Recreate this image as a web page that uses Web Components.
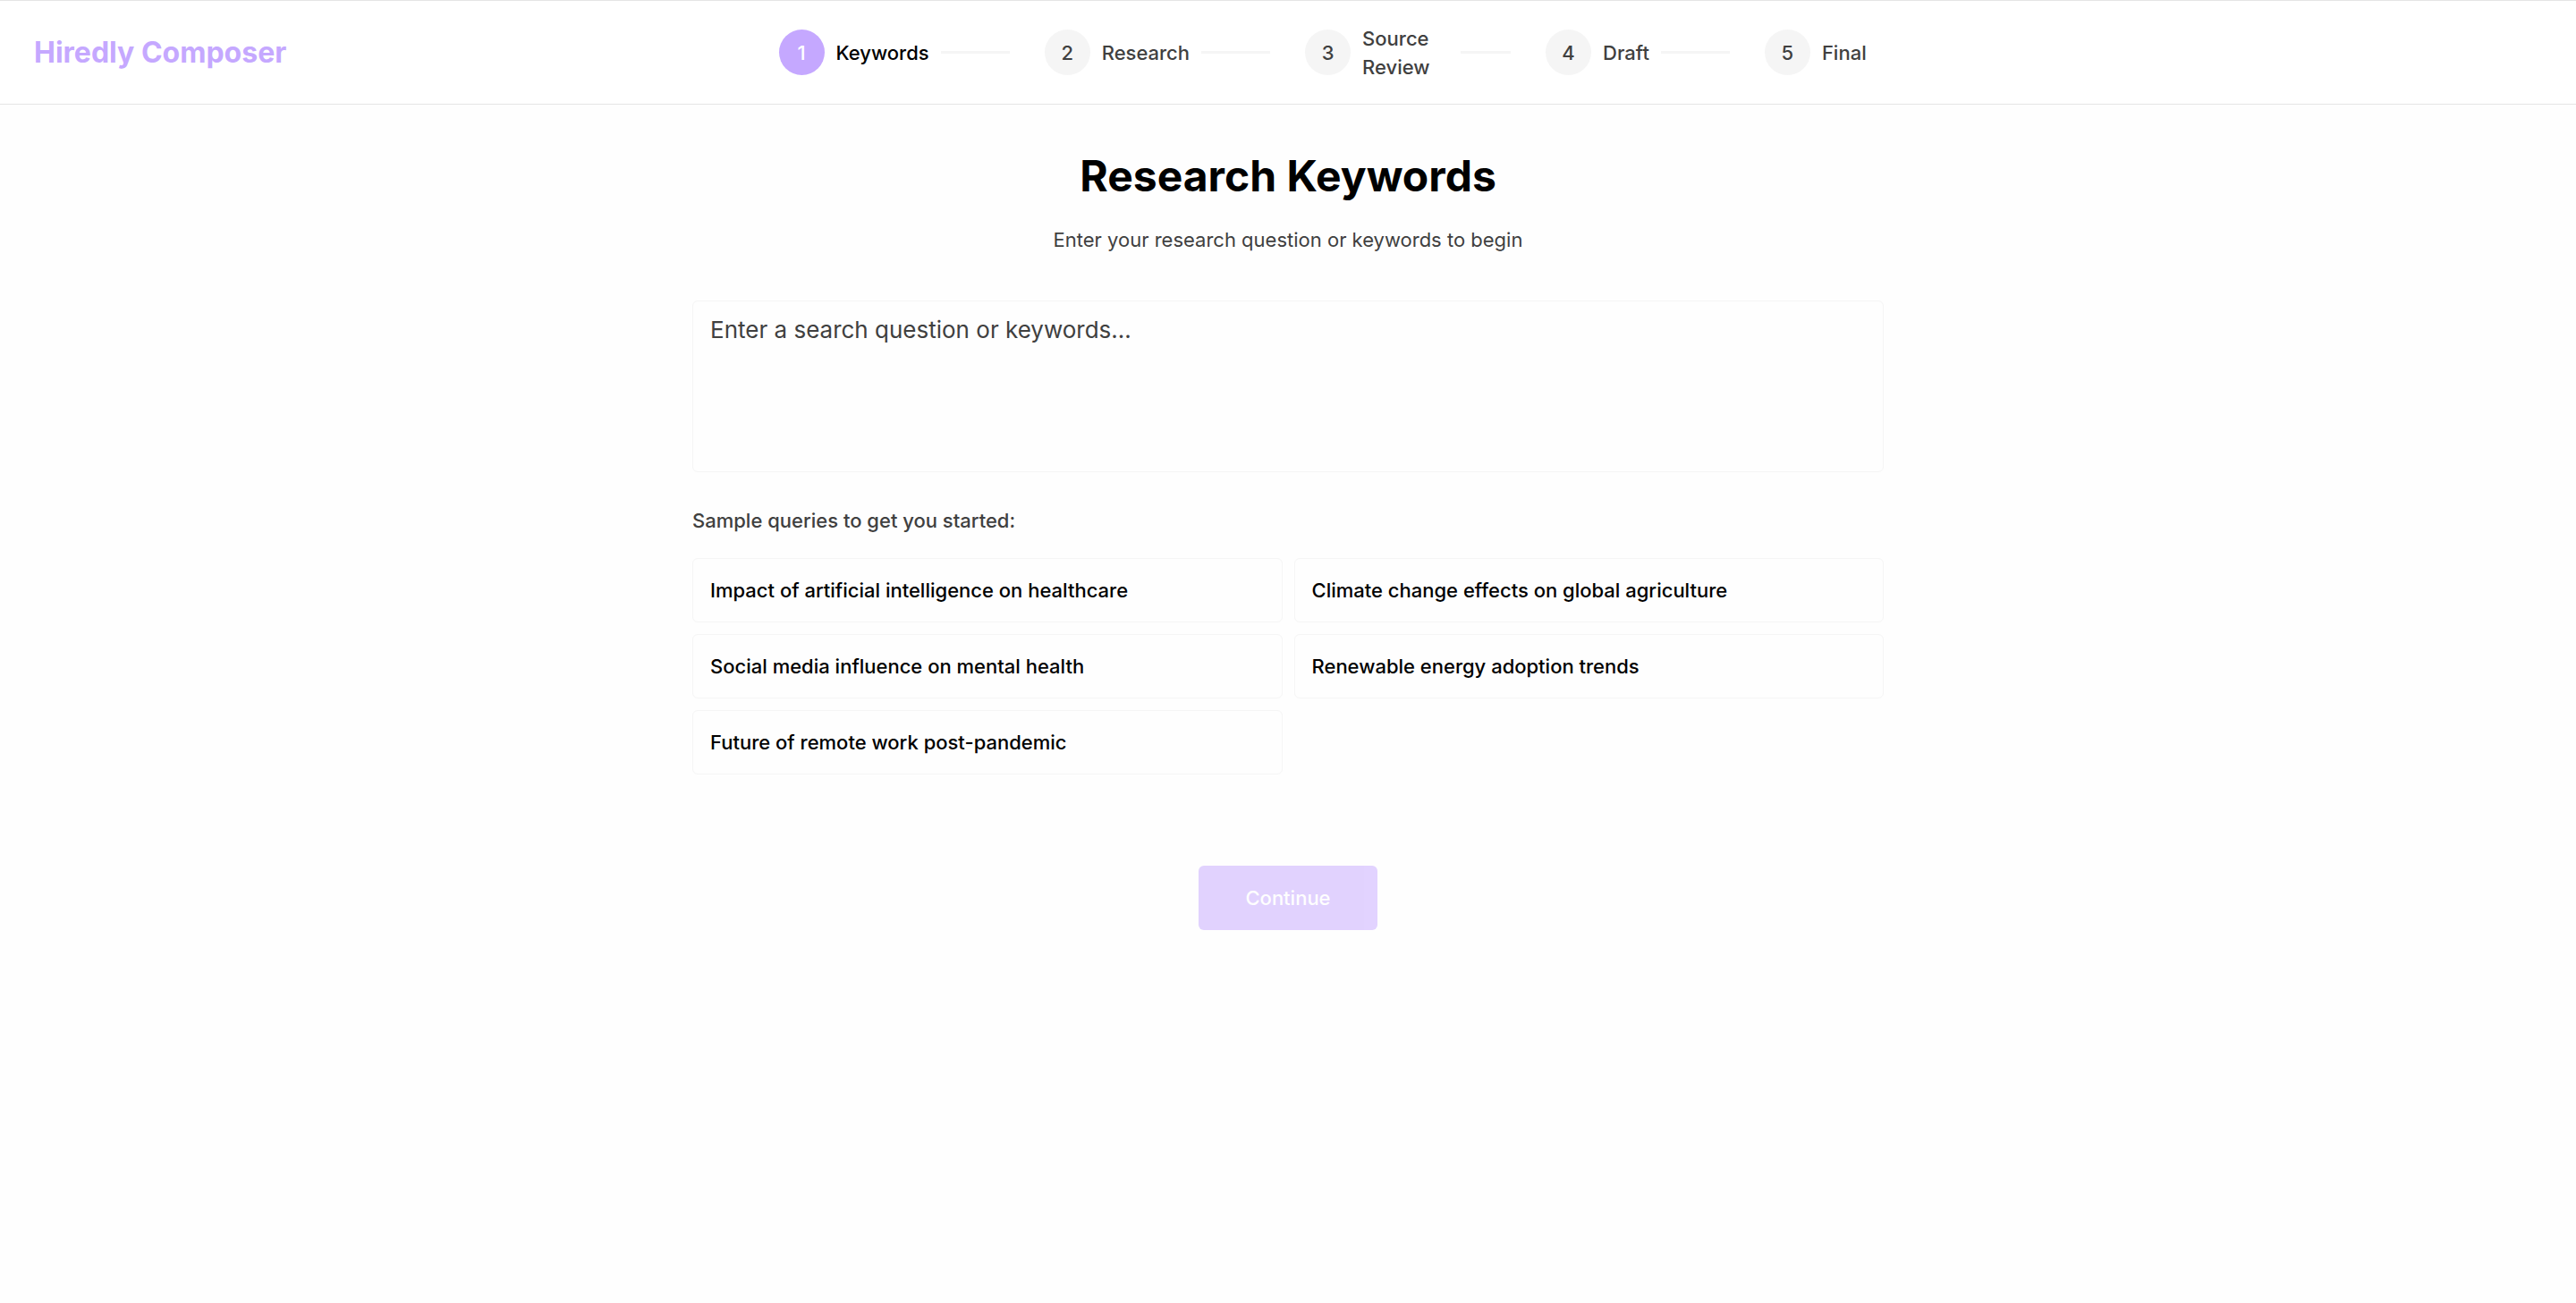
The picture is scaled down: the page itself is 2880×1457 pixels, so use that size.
<!DOCTYPE html>
<html lang="en">
<head>
<meta charset="utf-8">
<meta name="viewport" content="width=device-width, initial-scale=1">
<title>Hiredly Composer</title>
<style>
  :root {
    --primary: #c5a8ff;
    --muted: #404040;
    --soft: #f5f5f5;
    --line: #e5e5e5;
    --text: 22px;
    --leading: 32px;
    --radius: 6px;
  }
  body {
    margin: 0;
    background: #fefefe;
    color: #000;
    font: 400 var(--text)/var(--leading) Inter, "Liberation Sans", sans-serif;
  }
</style>
</head>
<body>
<composer-app></composer-app>
<script>
  function define(name, html, setup) {
    const template = document.createElement('template');
    template.innerHTML = '<style>*{box-sizing:border-box}</style>' + html;
    customElements.define(name, class extends HTMLElement {
      constructor() {
        super();
        this.attachShadow({ mode: 'open' }).append(template.content.cloneNode(true));
      }
      connectedCallback() {
        if (setup) setup(this, this.shadowRoot);
      }
    });
  }

  define('progress-step', `
    <style>
      :host { display: flex; align-items: center; gap: 13px; font-weight: 500; color: var(--muted); }
      .dot { flex: none; display: grid; place-items: center; width: 51px; height: 51px; border-radius: 50%; background: var(--soft); }
      .line { flex: none; width: 77px; height: 3px; background: var(--soft); }
      :host([current]) { color: #000; }
      :host([current]) .dot { background: var(--primary); color: #fff; }
      :host([wrapped]) .label { width: 97px; }
      :host([wrapped]) .line { width: 56px; }
      :host([last]) .line { display: none; }
    </style>
    <span class="dot"></span><span class="label"><slot></slot></span><span class="line"></span>`,
    (host, root) => { root.querySelector('.dot').textContent = host.getAttribute('number'); });

  define('composer-header', `
    <style>
      :host { display: block; }
      header { display: flex; align-items: center; height: 117px; padding: 0 38px; background: #fff; border: solid var(--line); border-width: 1px 0; }
      .brand { color: var(--primary); font-size: 32px; line-height: 44px; font-weight: 700; text-decoration: none; }
      nav { flex: 1; display: flex; justify-content: center; gap: 39px; }
      .end { flex: none; width: 205px; }
    </style>
    <header>
      <a class="brand" href="#">Hiredly Composer</a>
      <nav aria-label="Progress">
        <progress-step number="1" current>Keywords</progress-step>
        <progress-step number="2">Research</progress-step>
        <progress-step number="3" wrapped>Source Review</progress-step>
        <progress-step number="4">Draft</progress-step>
        <progress-step number="5" last>Final</progress-step>
      </nav>
      <div class="end"></div>
    </header>`);

  define('sample-query', `
    <style>
      :host { display: block; }
      button { display: block; width: 100%; height: 72px; padding: 0 19px; font: inherit; font-weight: 500; text-align: left; color: #000; background: #fefefe; border: 1px solid var(--soft); border-radius: var(--radius); cursor: pointer; }
    </style>
    <button type="button"><slot></slot></button>`,
    (host, root) => {
      root.querySelector('button').onclick = () => host.dispatchEvent(
        new CustomEvent('pick', { bubbles: true, composed: true, detail: host.textContent }));
    });

  define('keyword-form', `
    <style>
      :host { display: block; width: 100%; max-width: 1434px; margin: 0 auto; padding: 51px; box-sizing: border-box; }
      h1 { margin: 0 0 26px; text-align: center; font-size: 48px; line-height: 58px; font-weight: 700; }
      .lead { margin: 0 0 52px; text-align: center; color: var(--muted); }
      textarea { display: block; width: 100%; height: 192px; padding: 13px 19px; font: inherit; font-size: 26px; line-height: 38px; color: #000; background: #fefefe; border: 1px solid var(--soft); border-radius: var(--radius); resize: none; }
      textarea::placeholder { color: var(--muted); opacity: 1; }
      h2 { margin: 38px 0 26px; font-size: inherit; line-height: inherit; font-weight: 500; color: var(--muted); }
      .samples { display: grid; grid-template-columns: 1fr 1fr; gap: 13px; }
      .actions { display: flex; justify-content: center; margin-top: 102px; }
      .go { height: 72px; padding: 0 52px; font: inherit; font-weight: 500; color: #fff; background: var(--primary); border: 0; border-radius: var(--radius); }
      .go:disabled { opacity: .5; }
    </style>
    <h1>Research Keywords</h1>
    <p class="lead">Enter your research question or keywords to begin</p>
    <textarea aria-label="Research question or keywords" placeholder="Enter a search question or keywords..."></textarea>
    <h2>Sample queries to get you started:</h2>
    <div class="samples">
      <sample-query>Impact of artificial intelligence on healthcare</sample-query>
      <sample-query>Climate change effects on global agriculture</sample-query>
      <sample-query>Social media influence on mental health</sample-query>
      <sample-query>Renewable energy adoption trends</sample-query>
      <sample-query>Future of remote work post-pandemic</sample-query>
    </div>
    <div class="actions"><button class="go" type="button" disabled>Continue</button></div>`,
    (host, root) => {
      const box = root.querySelector('textarea');
      const go = root.querySelector('.go');
      const update = () => { go.disabled = !box.value.trim(); };
      box.oninput = update;
      root.addEventListener('pick', e => { box.value = e.detail; update(); });
    });

  define('composer-app', `
    <style>:host { display: block; }</style>
    <composer-header></composer-header>
    <main><keyword-form></keyword-form></main>`);
</script>
</body>
</html>
